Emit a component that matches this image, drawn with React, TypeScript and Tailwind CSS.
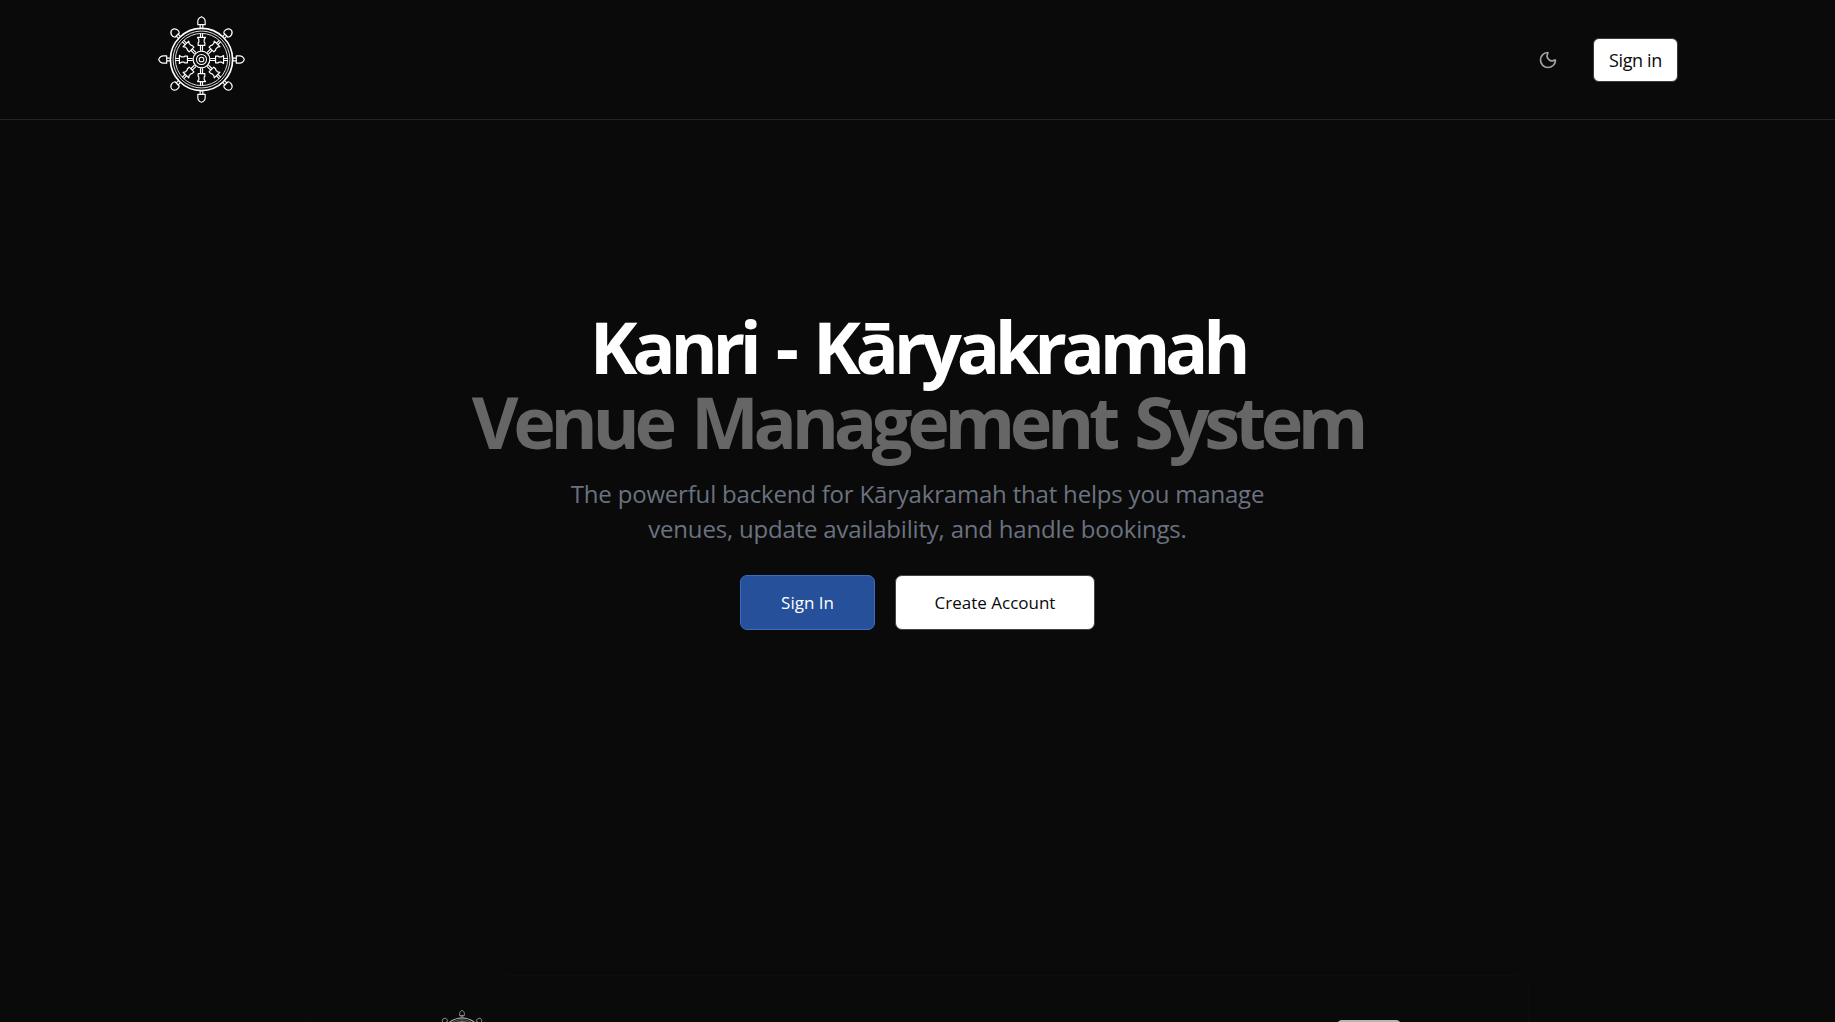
import { Moon } from "lucide-react"

const angles = [0, 45, 90, 135, 180, 225, 270, 315]

function WheelLogo({ className }: { className?: string }) {
  return (
    <svg viewBox="-130 -130 260 260" className={className} fill="none" stroke="currentColor" strokeLinejoin="round">
      {/* Handles and spokes */}
      {angles.map((a) => (
        <g key={a} transform={`rotate(${a})`} strokeWidth={3.5}>
          <path d="M-4 -93 L-4 -104 M4 -93 L4 -104" />
          {a % 90 === 0 ? (
            <path d="M-11 -104 L11 -104 L11 -114 C11 -122 5 -126 0 -128 C-5 -126 -11 -122 -11 -114 Z" />
          ) : (
            <path d="M-9 -103 L9 -103 C14 -108 13 -124 0 -125 C-13 -124 -14 -108 -9 -103 Z" />
          )}
          <path d="M-3 -26 L-3 -42 M3 -26 L3 -42" />
          <path d="M-10 -42 L10 -42 L10 -50 L8 -52 L8 -60 L12 -66 L-12 -66 L-8 -60 L-8 -52 L-10 -50 Z" />
          <path d="M-3 -66 L-3 -78 M3 -66 L3 -78" />
        </g>
      ))}
      {/* Rings */}
      <circle r={93} strokeWidth={5} />
      <circle r={85} strokeWidth={2.5} />
      <circle r={78} strokeWidth={2.5} />
      <circle r={25} strokeWidth={3.5} />
      <circle r={15} strokeWidth={3} />
      <circle r={7} strokeWidth={3} />
    </svg>
  )
}

export default function App() {
  return (
    <div className="h-[1022px] overflow-hidden bg-[#0a0a0a] font-['Open_Sans','Noto_Sans',sans-serif]">
      {/* Header */}
      <header className="h-[120px] border-b border-[#232325] pl-[158px] pr-[157px] flex items-center justify-between">
        <WheelLogo className="w-[87px] h-[87px] text-white" />
        <div className="flex items-center gap-[35px]">
          <Moon className="w-[20px] h-[20px] text-[#a3a3a3]" />
          <button className="w-[85px] h-[44px] pt-[1px] rounded-[6px] bg-white border border-[#3a3a3a] text-[#0a0a0a] text-[18px] tracking-[-0.02em]">
            Sign in
          </button>
        </div>
      </header>

      {/* Hero */}
      <section className="pt-[189px] flex flex-col items-center text-center">
        <h1 className="text-[72px] leading-[75px] font-bold tracking-[-0.074em] [word-spacing:6px] text-white">
          Kanri - Kāryakramah
          <br />
          <span className="text-[#666666]">Venue Management System</span>
        </h1>
        <p className="mt-[17px] text-[24px] leading-[35px] tracking-[-0.008em] text-[#6b7280]">
          The powerful backend for Kāryakramah that helps you manage
          <br />
          venues, update availability, and handle bookings.
        </p>
        <div className="mt-[29px] flex gap-[20px]">
          <button className="w-[135px] h-[55px] rounded-[7px] bg-[#27509b] border border-[#3a6cc0] text-white text-[17px]">
            Sign In
          </button>
          <button className="w-[200px] h-[55px] rounded-[7px] bg-white border border-[#444444] text-[#0a0a0a] text-[17px]">
            Create Account
          </button>
        </div>
      </section>

      {/* Preview card, mostly below the fold */}
      <div className="mt-[345px] mx-auto w-[1223px] h-[200px] rounded-t-[12px] border border-[#0e0e0e] pl-[127px] pr-[127px] pt-[34px] flex items-start justify-between opacity-70">
        <WheelLogo className="w-[56px] h-[56px] text-white" />
        <div className="mt-[10px] w-[64px] h-[33px] rounded-[5px] bg-white" />
      </div>
    </div>
  )
}
